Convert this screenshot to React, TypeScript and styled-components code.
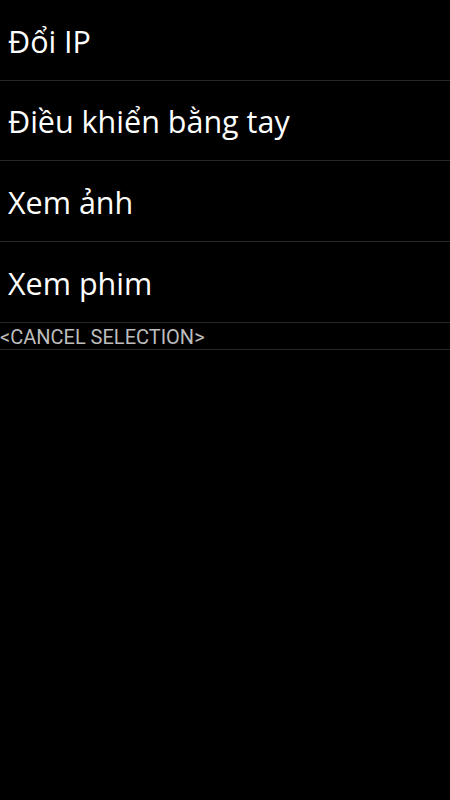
import React from 'react';
import styled, { createGlobalStyle } from 'styled-components';

const GlobalStyle = createGlobalStyle`
  html, body {
    margin: 0;
    padding: 0;
    background: #000;
  }

  body {
    font-family: 'Open Sans', Roboto, sans-serif;
  }
`;

const Screen = styled.div`
  display: flex;
  flex-direction: column;
  width: 450px;
  min-height: 800px;
  background: #000;
`;

const MenuList = styled.ul`
  display: flex;
  flex-direction: column;
  margin: 0;
  padding: 0;
  list-style: none;
`;

const MenuItem = styled.li`
  display: flex;
  align-items: center;
  box-sizing: border-box;
  height: 80.67px;
  border-bottom: 1px solid #272727;
  padding: 2px 8px 0;
  color: #fff;
  font-size: 30.5px;
  line-height: 1;
  cursor: pointer;
`;

const CancelRow = styled.div`
  display: flex;
  align-items: center;
  box-sizing: border-box;
  height: 27px;
  border-bottom: 1px solid #272727;
  padding: 3px 0 0;
  color: #bdbdbd;
  font-family: Roboto, sans-serif;
  font-size: 20px;
  line-height: 1;
  cursor: pointer;
`;

const items = ['Đổi IP', 'Điều khiển bằng tay', 'Xem ảnh', 'Xem phim'];

const App = () => {
  return (
    <Screen>
      <GlobalStyle />
      <MenuList>
        {items.map((label) => (
          <MenuItem key={label}>{label}</MenuItem>
        ))}
      </MenuList>
      <CancelRow>&lt;CANCEL SELECTION&gt;</CancelRow>
    </Screen>
  );
};

export default App;
